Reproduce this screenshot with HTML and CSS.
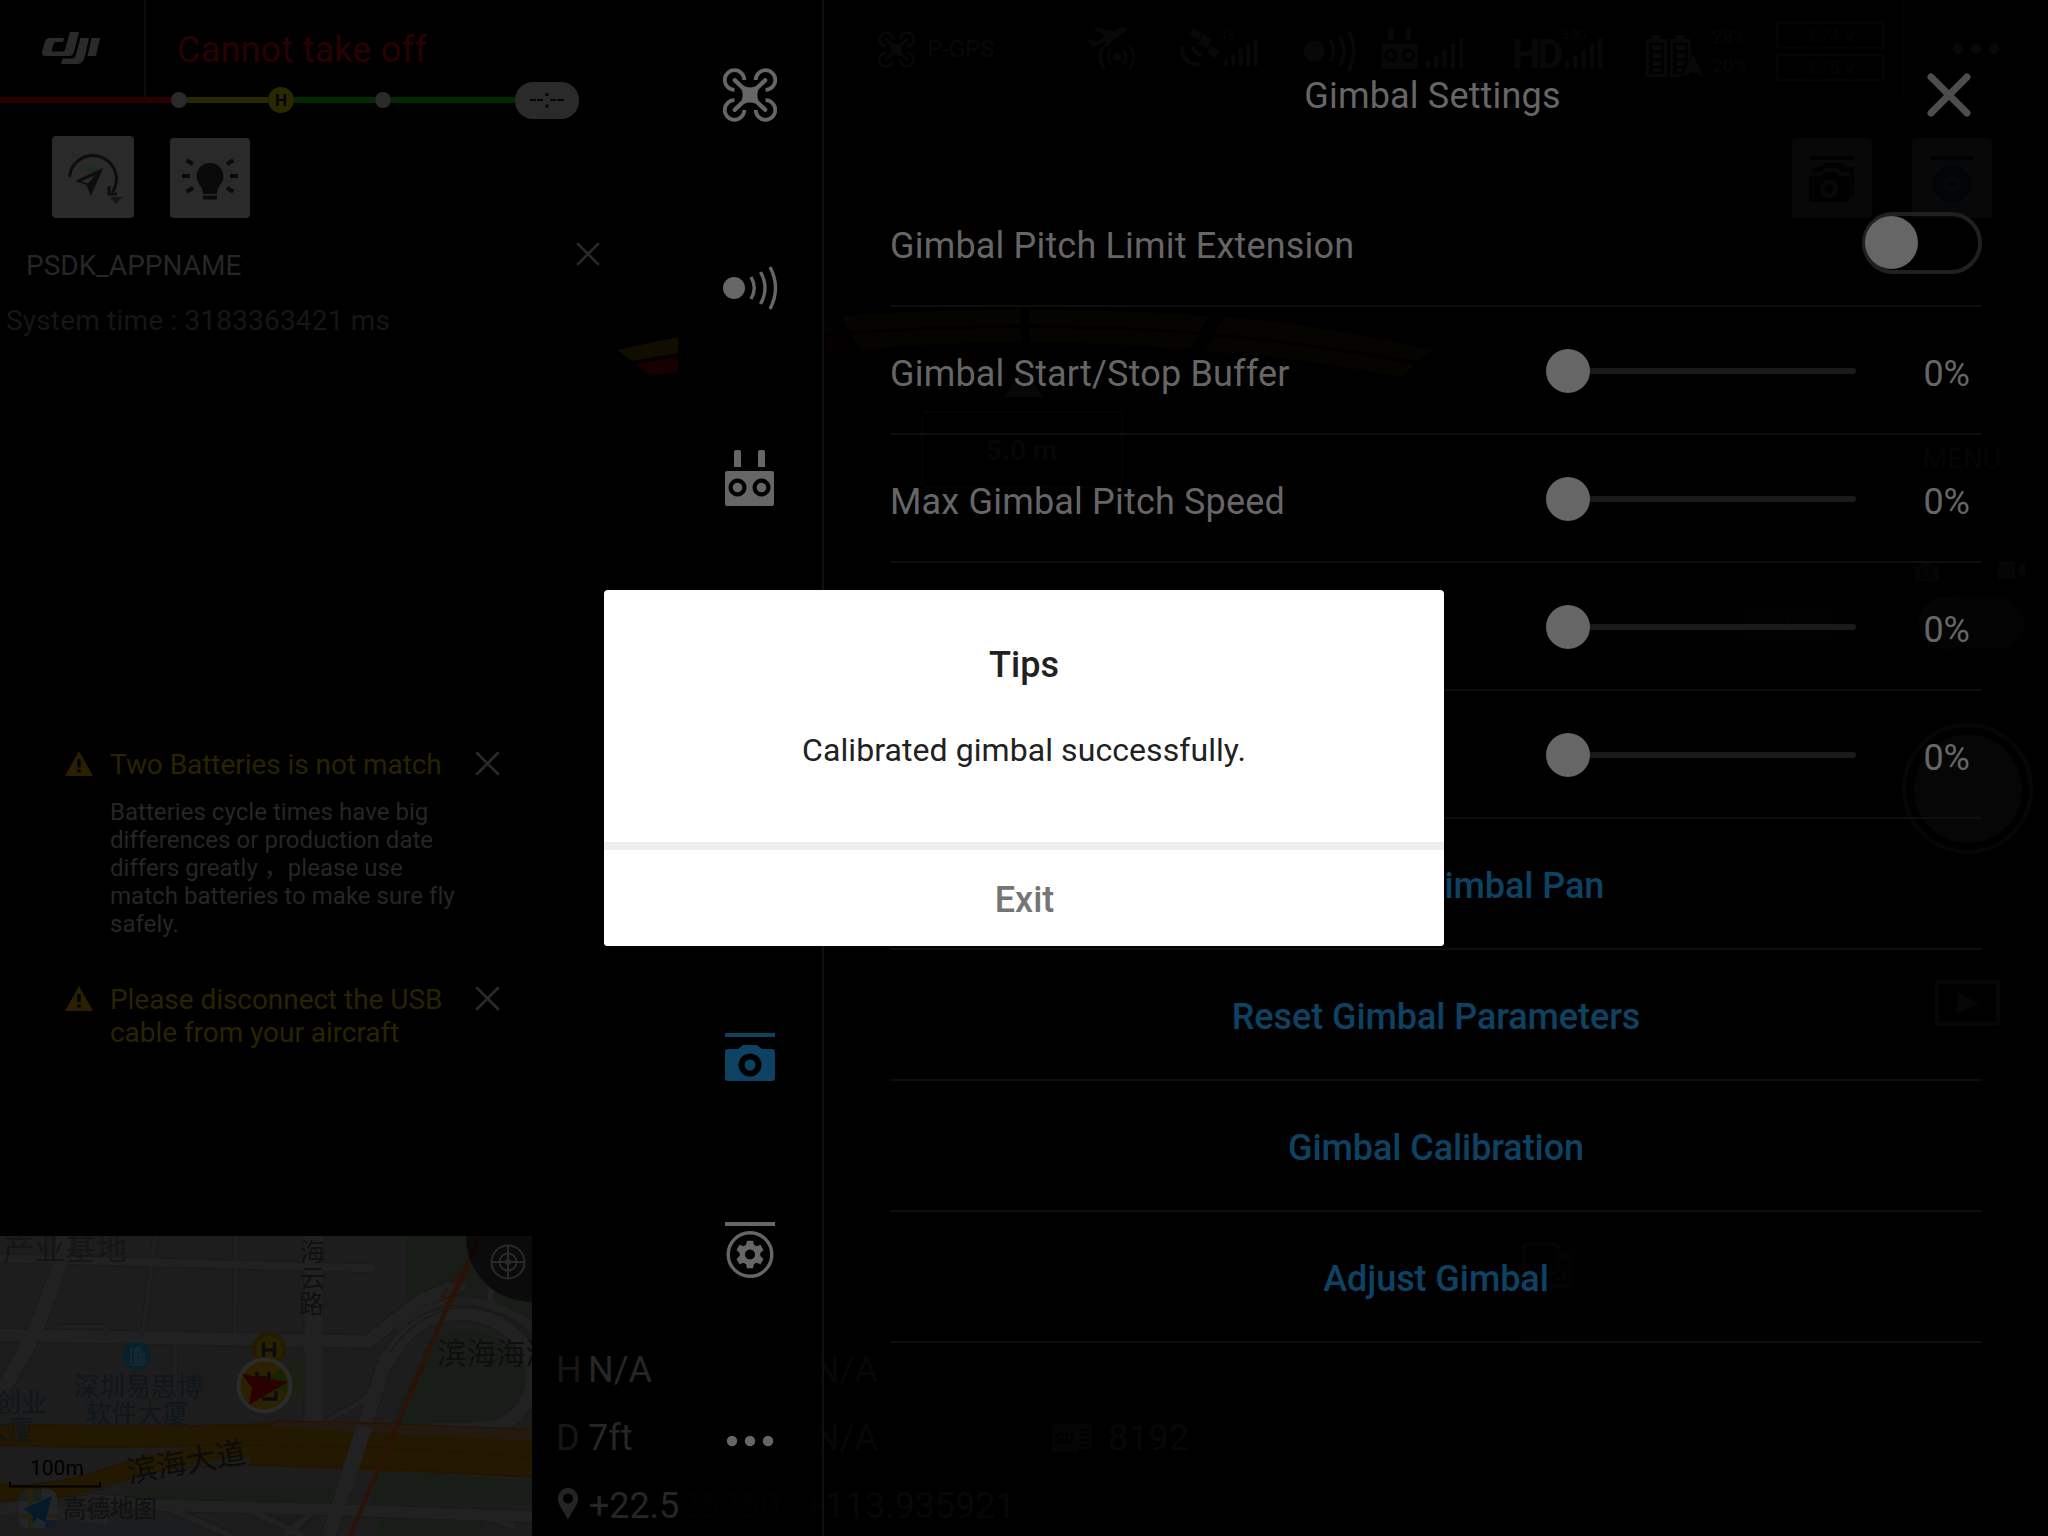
FILE: index.html
```html
<!DOCTYPE html>
<html lang="en">
<head>
<meta charset="utf-8">
<title>Gimbal Settings</title>
<link rel="stylesheet" href="styles.css">
</head>
<body>
<svg class="defs" aria-hidden="true">
  <symbol id="drone" viewBox="0 0 54 54">
    <g fill="none" stroke="currentColor" stroke-width="3.800">
      <path d="M21.3 12a9.8 9.8 0 1 0-9.8 9.8"/>
      <path d="M32.7 12a9.8 9.8 0 1 1 9.8 9.8"/>
      <path d="M21.3 42a9.8 9.8 0 1 1-9.8-9.8"/>
      <path d="M32.7 42a9.8 9.8 0 1 0 9.8-9.8"/>
    </g>
    <path fill="currentColor" d="M10.300 10.600q2-1.600 3.400.4L21 18q6 2.800 12 0L40.300 11q1.600-2 3.400-.4 1.600 1.800-.4 3.600L35.500 21.500q-2.300 5.500 0 11L43.300 39.800q2 1.800.4 3.600-1.800 1.600-3.400-.4L33 36q-6-2.800-12 0L13.700 43q-1.600 2-3.400.4-1.600-1.800.4-3.600L18.500 32.500q2.300-5.500 0-11L10.700 14.200q-2-1.800-.4-3.600z"/>
  </symbol>
  <symbol id="sense" viewBox="0 0 56 44">
    <circle cx="11" cy="22" r="11" fill="currentColor"/>
    <g fill="none" stroke="currentColor" stroke-width="3.400">
      <path d="M28 11q6.500 11 0 22M37.500 6q9 16 0 32M47 1q11 21 0 42"/>
    </g>
  </symbol>
  <symbol id="remote" viewBox="0 0 50 56">
    <path fill="currentColor" fill-rule="evenodd" d="M11 0h3q2 0 2 2v15h-7V2q0-2 2-2zM35 0h3q2 0 2 2v15h-7V2q0-2 2-2zM2 21h45q2 0 2 2v31q0 2-2 2H2q-2 0-2-2V23q0-2 2-2zM12.500 28.500a9 9 0 1 0 .01 0zM36.500 28.500a9 9 0 1 0 .01 0z"/>
    <circle cx="12.500" cy="37.500" r="4.800" fill="currentColor"/><circle cx="36.500" cy="37.500" r="4.800" fill="currentColor"/>
  </symbol>
  <symbol id="bars" viewBox="0 0 40 32">
    <path fill="currentColor" d="M0 24h4.500v8H0zM8.700 18h4.500v14H8.700zM17.400 12h4.500v20h-4.500zM26.100 6h4.500v26h-4.500zM34.800 0h4.500v32h-4.500z"/>
  </symbol>
  <symbol id="cross" viewBox="0 0 24 24">
    <path d="M1.200 1.200 22.800 22.800M22.800 1.200 1.200 22.800" fill="none" stroke="currentColor" stroke-width="2.600"/>
  </symbol>
  <symbol id="warn" viewBox="0 0 28 25">
    <path fill="currentColor" fill-rule="evenodd" d="M14 0 28 25H0zM12.300 8v8.500h3.400V8zM12.300 18.500v3h3.400v-3z"/>
  </symbol>
  <symbol id="gear" viewBox="0 0 28 28">
    <path fill="currentColor" fill-rule="evenodd" d="M11 0h6l.9 4.200 2.600 1.500 4-1.400 3 5.200-3.200 2.900v3.200l3.200 2.900-3 5.200-4-1.400-2.600 1.500L17 28h-6l-.9-4.200-2.600-1.500-4 1.400-3-5.200 3.200-2.900v-3.200L.5 9.500l3-5.200 4 1.400 2.600-1.500zM14 9a5 5 0 1 0 .01 0z"/>
  </symbol>
</svg>

<div class="screen">
  <section class="hud">
    <header class="topbar">
      <svg class="logo" viewBox="0 0 58 32" fill="currentColor">
        <path fill-rule="evenodd" d="M28 0h9l-5 20q-1 4-5 4H4q-4.500 0-4-4L2.500 11Q3.500 6 8 6h14l-1 4h-7q-2 0-2.600 2.400L10 17.500q-.5 2 1.500 2h9q2 0 2.500-2z"/>
        <path d="M38.500 6H47l-4 18q-1.800 8-8 8H19l1.500-5.500H30q3 0 3.700-3z"/>
        <path d="M49.500 6H58l-4 18h-8.500z"/>
      </svg>
      <i class="vline"></i>
      <h1 class="flight-status">Cannot take off</h1>
      <div class="stat mode"><svg class="i-drone"><use href="#drone"/></svg><span>P-GPS</span></div>
      <svg class="i-plane" viewBox="0 0 46 43" fill="currentColor"><path d="M0 14l4-1 4 2 9-6L5 2l5-1 15 3 8-4q6-1 6 2-1 3-5 5l-8 5-6 7-5 1 4-7L6 20q-3 0-6-6z"/><circle cx="29" cy="30" r="4"/><g fill="none" stroke="currentColor" stroke-width="2.600"><path d="M23 22q-6 8 0 16M35 22q6 8 0 16M17 18q-10 12 0 24M41 18q10 12 0 24"/></g></svg>
      <div class="stat gps"><svg class="i-sat" viewBox="0 0 40 39" fill="currentColor"><path d="M13 0l9 5-3 7-9-6zM24 6l8 6-5 9-9-6zM31 18l8 5-4 7-8-6z"/><path d="M13 18q1 8 9 9M2 19q0 17 18 18" fill="none" stroke="currentColor" stroke-width="4"/></svg><div class="sig"><small>15</small><svg class="i-bars"><use href="#bars"/></svg></div></div>
      <svg class="i-sense"><use href="#sense"/></svg>
      <div class="stat rc"><svg class="i-rc"><use href="#remote"/></svg><svg class="i-bars"><use href="#bars"/></svg></div>
      <div class="stat hd"><b>HD</b><div class="sig"><small>5.8G</small><svg class="i-bars"><use href="#bars"/></svg></div></div>
      <div class="stat batt"><svg class="i-batt" viewBox="0 0 58 42" fill="currentColor"><path fill-rule="evenodd" d="M0 4h6V0h8v4h7v38H0zM3 8v31h15V8zM24 4h6V0h8v4h7v16l-3 7V8H27v31h8l-1 3H24z"/><path d="M6 10h9v5H6zM6 18h9v5H6zM6 26h9v5H6zM6 33h9v4H6zM30 10h9v5h-9zM30 18h9v5h-9zM30 26h8v5h-8zM30 33h6v4h-6zM47 20l11 22-11-5-11 5z"/></svg><div class="pct"><span>28%</span><span>20%</span></div></div>
      <div class="volts"><span>3.74 V</span><span>3.75 V</span></div>
      <i class="vline"></i>
      <svg class="i-more" viewBox="0 0 46 10" fill="currentColor"><circle cx="5" cy="5" r="5"/><circle cx="23" cy="5" r="5"/><circle cx="41" cy="5" r="5"/></svg>
    </header>

    <div class="timeline">
      <i class="seg red"></i><i class="dot"></i><i class="seg yellow"></i><b class="home">H</b><i class="seg green"></i><i class="dot"></i><i class="seg green last"></i>
      <span class="pill"><svg viewBox="0 0 34 16" fill="#050505"><path d="M0 7h6v2H0zM7 7h6v2H7zM20 7h6v2h-6zM27 7h7v2h-7zM15.500 1h3v3h-3zM15.500 12.500h3v3h-3z"/></svg></span>
    </div>

    <div class="body">
      <div class="left">
        <div class="tools">
          <span class="tile big"><svg viewBox="0 0 82 82"><defs><linearGradient id="beam" x1="0" y1="0" x2="0" y2="1"><stop offset="0" stop-color="#28302a" stop-opacity=".2"/><stop offset="1" stop-color="#0c2a14"/></linearGradient></defs><path d="M28 27q13-7 25 0L42 43z" fill="url(#beam)"/><path d="M17.500 41a23.500 23.500 0 1 1 43 15" fill="none" stroke="#0d0d0d" stroke-width="3"/><path d="M57 50v8h8" fill="none" stroke="#0d0d0d" stroke-width="3"/><path fill-rule="evenodd" fill="#0d0d0d" d="M51 32 39 60l-4.500-11L23 45zM44 39l-15 6 7 2.500z"/><path d="M58 61h12l-6 7z" fill="#151515"/></svg></span>
          <span class="tile"><svg viewBox="0 0 80 80" fill="#0a0a0a"><path d="M40 25c-8 0-13.500 6-13.500 13.500 0 7 6.500 9 6.500 17.500h14c0-8.500 6.500-10.500 6.500-17.500C53.500 31 48 25 40 25zM33 57.500h14v4H33z"/><path d="M12 36h8v4h-8zM60 36h8v4h-8zM15.500 24l2.500-3.500 6 4-2 3.500zM64.500 24 62 20.500l-6 4 2 3.500zM15.500 52l2.500 3.500 6-4-2-3.500zM64.500 52 62 55.500l-6-4 2-3.500z"/></svg></span>
        </div>
        <div class="psdk">
          <div class="psdk-head"><span>PSDK_APPNAME</span><svg class="x"><use href="#cross"/></svg></div>
          <p>System time : 3183363421 ms</p>
        </div>
        <div class="warnings">
          <article>
            <svg class="warn"><use href="#warn"/></svg>
            <div class="msg"><h2>Two Batteries is not match</h2>
            <p>Batteries cycle times have big<br>differences or production date<br>differs greatly ，please use<br>match batteries to make sure fly<br>safely.</p></div>
            <svg class="x"><use href="#cross"/></svg>
          </article>
          <article>
            <svg class="warn"><use href="#warn"/></svg>
            <div class="msg"><h2>Please disconnect the USB<br>cable from your aircraft</h2></div>
            <svg class="x"><use href="#cross"/></svg>
          </article>
        </div>
        <svg class="map" viewBox="0 0 532 300">
          <rect width="532" height="300" fill="#1d1d1d"/>
          <g transform="scale(.35714 .33333) translate(0 -48)">
            <path d="M1140 48h350v330l-100-80-140-50-110 0zM1230 620q120 0 180-30 60-30 55-120-10-90-110-130-90-30-160 40l-110 250zM380 800h560l-30 50H330zM1060 745l430 40v70l-450-8zM760 880l130 10-70 60zM1050 948l20-60 250-5 40 20-30 45z" fill="#191d18"/>
            <path d="M450 875q100 0 200 73H130v-50z" fill="#1b1d1f"/>
            <g fill="none" stroke="#1a1a1a" stroke-linejoin="round">
              <path d="M0 345 1030 365 1180 240 1300 190" stroke-width="44"/>
              <path d="M180 48 170 130 95 345 40 450 0 520" stroke-width="48"/>
              <path d="M435 48 400 345M660 48 658 345M165 320H295V350M490 370V600" stroke-width="18"/>
              <path d="M0 115 1040 145" stroke-width="30" stroke-linecap="round"/>
              <path d="M878 48V600" stroke-width="58"/>
              <path d="M920 600 1020 540 1130 380" stroke-width="20"/>
              <path d="M920 948 1020 620 1080 420Q1170 270 1310 280 1500 320 1490 500 1460 620 1350 625 1280 630 1210 625" stroke-width="46"/>
              <path d="M1375 200v50l115 60" stroke-width="24"/>
              <path d="M230 835 420 855 900 868 1490 890" stroke-width="40"/>
              <path d="M480 870 650 948M700 870 850 948M870 880 800 948M1300 870 1440 920" stroke-width="24"/>
            </g>
            <g fill="none" stroke="#212121" stroke-linejoin="round">
              <path d="M0 345 1030 365 1180 240 1300 190" stroke-width="38"/>
              <path d="M180 48 170 130 95 345 40 450 0 520" stroke-width="42"/>
              <path d="M435 48 400 345M660 48 658 345M165 320H295V350M490 370V600" stroke-width="12" stroke="#1f1f1f"/>
              <path d="M0 115 1040 145" stroke-width="24" stroke-linecap="round"/>
              <path d="M878 48V610" stroke-width="52"/>
              <path d="M920 600 1020 540 1130 380" stroke-width="14"/>
              <path d="M920 948 1020 620 1080 420Q1170 270 1310 280 1500 320 1490 500 1460 620 1350 625 1280 630 1210 625" stroke-width="40"/>
              <path d="M1375 200v50l115 60" stroke-width="18"/>
              <path d="M230 835 420 855 900 868 1490 890" stroke-width="34"/>
              <path d="M480 870 650 948M700 870 850 948M870 880 800 948M1300 870 1440 920" stroke-width="18"/>
              <path d="M0 870 60 860 300 900" stroke-width="30"/>
            </g>
            <path d="M1110 330Q1200 230 1330 245 1430 265 1490 330" fill="none" stroke="#202020" stroke-width="20"/>
            <path d="M1090 400Q1180 262 1310 262 1430 275 1490 350" fill="none" stroke="#191919" stroke-width="3"/>
            <g fill="none" stroke="#231900"><path d="M0 645Q300 655 540 648T780 640L1100 650 1490 690" stroke-width="66"/><path d="M700 700 1490 735" stroke-width="74"/><path d="M0 818Q150 825 280 775T640 690L820 680" stroke-width="50"/></g>
            <path d="M760 605h240l490 25v32l-380-20-350-22z" fill="#251a10"/>
            <path d="M0 613 540 617 750 615 780 603 1000 608 1490 628M0 674Q300 690 560 674L1060 682 1490 712M0 793Q120 800 230 768T420 702M0 843 240 826Q330 780 480 745L700 735 1040 742 1490 772" fill="none" stroke="#241300" stroke-width="3"/>
            <path d="M1020 620 960 820" fill="none" stroke="#212121" stroke-width="44"/>
            <path d="M1345 48 1240 290 980 948" fill="none" stroke="#2a1206" stroke-width="12"/>
            <path d="M1305 48h185v198q-100-5-150-80-35-50-35-118z" fill="#0a0b0a"/>
            <path d="M1345 48 1318 110" stroke="#120700" stroke-width="12"/>
            <path d="M760 480 850 400v110l-30 30z" fill="#1a2012"/>
          </g>
          <g class="cjk" lang="zh-CN">
            <text x="3" y="24" font-size="31" fill="#151515">产业基地</text>
            <text x="300 300 299" y="24.500 50.500 76.500" font-size="25" fill="#101010">海云路</text>
            <g font-size="26" fill="#0e171b"><text x="73" y="160">深圳易思博</text><text x="85" y="187">软件大厦</text><text x="-5" y="176">创业</text><text x="-18" y="203">大厦</text></g>
            <text x="437" y="128" font-size="29.500" fill="#0e0e0e">滨海海滨</text>
            <text transform="translate(129 247) rotate(-10)" font-size="30" fill="#0b0b0b">滨海大道</text>
            <text transform="translate(447 32) rotate(20)" x="14 5 3" y="2 17 33" font-size="18" fill="#2c1206">2号线</text>
            <text x="63" y="281" font-size="23.500" font-weight="500" fill="#121212">高德地图</text>
          </g>
          <circle cx="137" cy="120" r="14" fill="#06222d"/><path d="M131 127v-14h4v14M137 127v-15h3v15M141 127v-9h3v9M129 128.500h16" fill="none" stroke="#1c2a30" stroke-width="1.500"/>
          <circle cx="269" cy="113" r="17" fill="#231c00"/><circle cx="269" cy="113" r="13" fill="#2a2100"/>
          <path d="M263.500 106v15M274.500 106v15M263.500 114h11" stroke="#0b0b0b" stroke-width="3.200" fill="none"/>
          <circle cx="264.500" cy="149.500" r="26" fill="#2a2100" stroke="#2b2b2b" stroke-width="4"/>
          <path d="M264 149 280 133a23 23 0 0 1 6 23z" fill="#142400"/><path d="M257 136v6h12v-6M262 163h14v-8" fill="none" stroke="#0b0b0b" stroke-width="3.500"/>
          <path d="M242 138 288 146 249 169 252 152z" fill="#2a0000"/>
          <g fill="none" stroke="#2a2a2a" stroke-width="2"><circle cx="508" cy="26" r="16.500"/><circle cx="508" cy="26" r="8.500"/><path d="M491 26h34M508 9v34"/></g><circle cx="508" cy="26" r="3" fill="#2a2a2a"/>
          <text class="scale" x="30" y="239" font-size="21" fill="#000">100m</text>
          <path d="M10 246v4.500h90V246" fill="none" stroke="#000" stroke-width="2"/>
          <rect x="19" y="253" width="38" height="39" rx="9" fill="#232526"/><path d="M19 264q0-11 9-11h14v12H19z" fill="#17201a"/><path d="M28 253h5v39h-5zM19 278h38v4H19z" fill="#262010"/><path d="M45 284h12q0 8-8 8h-4z" fill="#121a2c"/>
          <path d="M52 260 24 273l8 5 1 8 5-4 7 4z" fill="#04192a"/>
        </svg>
      </div>

      <div class="center">
        <svg class="radar" viewBox="0 0 816 100">
          <path fill="#110d00" d="M0 42Q110 17 208 9L219 25Q115 35 15 53z"/>
          <path fill="#1c1500" d="M224 8Q310 2 404 1v15q-85 1-171 8zM234 26q85-5 170-6v14q-85 1-161 7zM412 1q94 1 180 7l-9 16q-86-7-171-8zM412 20q85 1 170 6l-9 15q-80-6-161-7zM608 9q98 8 208 33l-15 11Q701 35 597 25zM596 29q100 8 202 28l-15 12Q690 50 586 43z"/>
          <path d="M18 56Q120 37 217 29L228 43Q130 51 34 68z" fill="#160000"/>
          <path d="M387 89 406.500 60 426 89z" fill="#262626"/>
        </svg>
        <div class="distance">5.0 m</div>
        <div class="telemetry">
          <span class="k">H</span><span>N/A</span><span class="k">V.S</span><span>N/A</span><i></i><i></i>
          <span class="k">D</span><span>7ft</span><span class="k">H.S.</span><span>N/A</span><svg class="sd" viewBox="0 0 40 28" fill="currentColor"><path fill-rule="evenodd" d="M2 0h36q2 0 2 2v21q0 2-2 2H26v3H2q-2 0-2-2V2q0-2 2-2zM28 5v2h9V5zM28 10v2h9v-2zM28 15v2h9v-2zM28 20v2h9v-2z"/><text x="3" y="20" font-size="15" font-weight="700" fill="#000">SD</text></svg><span>8192</span>
          <svg class="pin" viewBox="0 0 20 32"><path fill="currentColor" fill-rule="evenodd" d="M10 0a10 10 0 0 1 10 10.500C20 18 13 24 10 32 7 24 0 18 0 10.500A10 10 0 0 1 10 0zM10 5.500a5 5 0 1 0 .01 0z"/></svg><span class="coords">+22.525350 , +113.935921</span>
        </div>
      </div>

      <div class="right">
        <div class="modes">
          <span class="tile"><svg viewBox="0 0 80 80" fill="#060606"><path d="M18 18h44v4H18z"/><path d="M20 31q0-2 2-2h7l4-4h16l4 4h6q3 0 3 3v22q0 3-3 5V37q0-3-3-3h-6l-4-4H33l-4 4h-9z"/><path fill-rule="evenodd" d="M17 41q0-3 3-3h8l4-4h12l4 4h7q3 0 3 3v20q0 3-3 3H20q-3 0-3-3zM37 42a9 9 0 1 0 .01 0z"/><circle cx="37" cy="51" r="4.500"/></svg></span>
          <span class="tile"><svg viewBox="0 0 80 80"><path d="M18 18h44v4H18z" fill="#04121c"/><circle cx="40" cy="46" r="19.500" fill="#061a28"/><svg x="30" y="36" width="20" height="20" color="#2a2a2a"><use href="#gear"/></svg></svg></span>
        </div>
        <div class="menu">MENU</div>
        <div class="capture"><svg class="i-cam" viewBox="0 0 25 20"><path fill="currentColor" fill-rule="evenodd" d="M0 5h7l2-4h7l2 4h7v15H0zM12.500 6a6 6 0 1 0 .01 0z"/><circle cx="12.500" cy="12" r="4.500" fill="currentColor"/></svg><svg class="i-vid" viewBox="0 0 27 18"><path fill="currentColor" d="M0 0h17v18H0zM20 7l7-7v18l-7-6z"/></svg></div>
        <div class="switchrow"><span class="ev">0</span><span class="cam-switch"><i></i></span></div>
        <div class="shutter"><i></i></div>
        <svg class="play" viewBox="0 0 66 46"><rect x="2" y="2" width="62" height="42" rx="1" fill="none" stroke="currentColor" stroke-width="4"/><path d="M22 12 45 23 22 34z" fill="currentColor"/></svg>
        <div class="pip"><svg viewBox="0 0 50 46" fill="none" stroke="currentColor" stroke-width="3"><rect x="2" y="2" width="34" height="29" rx="2"/><path d="M40 14h6q2 0 2 2v26q0 2-2 2H24M42 28v10h-10"/></svg></div>
      </div>
    </div>
  </section>

  <section class="drawer">
    <nav class="tabs">
      <a><svg width="54" height="54"><use href="#drone"/></svg></a>
      <a><svg width="56" height="44"><use href="#sense"/></svg></a>
      <a><svg width="50" height="56"><use href="#remote"/></svg></a>
      <a></a>
      <a></a>
      <a class="active"><svg width="50" height="48" viewBox="0 0 50 48" fill="currentColor"><path d="M0 0h50v4H0z"/><path fill-rule="evenodd" d="M3 16h10l5-4h14l5 4h10q3 0 3 3v26q0 3-3 3H3q-3 0-3-3V19q0-3 3-3zM25 20.500a11.500 11.500 0 1 0 .01 0z"/><circle cx="25" cy="32" r="5.500"/></svg></a>
      <a><svg width="50" height="56" viewBox="0 0 50 56"><path d="M0 0h50v4H0z" fill="currentColor"/><circle cx="25" cy="32.500" r="21.800" fill="none" stroke="currentColor" stroke-width="3.400"/><svg x="11" y="18.500" width="28" height="28"><use href="#gear"/></svg></svg></a>
      <a><svg width="48" height="12" viewBox="0 0 48 12" fill="currentColor"><circle cx="6" cy="6" r="5.200"/><circle cx="24" cy="6" r="5.200"/><circle cx="42" cy="6" r="5.200"/></svg></a>
    </nav>
    <div class="settings">
      <header><h2>Gimbal Settings</h2><svg class="close" viewBox="0 0 44 44"><path d="M4 4 40 40M40 4 4 40" stroke="currentColor" stroke-width="7" stroke-linecap="round"/></svg></header>
      <div class="row"><label>Gimbal Pitch Limit Extension</label><span class="toggle"><i></i></span></div>
      <div class="row"><label>Gimbal Start/Stop Buffer</label><span class="slider"><i></i></span><output>0%</output></div>
      <div class="row"><label>Max Gimbal Pitch Speed</label><span class="slider"><i></i></span><output>0%</output></div>
      <div class="row"><label></label><span class="slider"><i></i></span><output>0%</output></div>
      <div class="row"><label></label><span class="slider"><i></i></span><output>0%</output></div>
      <a class="row action">Recenter Gimbal Pan</a>
      <a class="row action">Reset Gimbal Parameters</a>
      <a class="row action">Gimbal Calibration</a>
      <a class="row action">Adjust Gimbal</a>
    </div>
  </section>

  <div class="dialog" role="dialog">
    <h2>Tips</h2>
    <p>Calibrated gimbal successfully.</p>
    <button>Exit</button>
  </div>
</div>
</body>
</html>
```
FILE: styles.css
```css
* { box-sizing: border-box; margin: 0; padding: 0; }
body { background: #000; font-family: Roboto, "Noto Sans CJK SC", sans-serif; color: #262626; }
h1, h2 { font-weight: 400; }
i { display: block; font-style: normal; }
svg { display: block; flex: none; }
.defs { position: absolute; width: 0; height: 0; }
.screen { position: relative; width: 2048px; height: 1536px; overflow: hidden; }

/* flight view */
.hud { height: 1536px; display: flex; flex-direction: column; white-space: nowrap; }
.topbar { height: 82px; flex: none; display: grid; align-items: start; justify-items: start; color: #2a2a2a;
  grid-template-columns: 144px 33px 701px 210px 92px 123px 78px 131px 134px 130px 126px 50px 1fr; }
.logo { width: 58px; height: 32px; margin: 32px 0 0 42px; }
.vline { width: 2px; height: 97px; background: #0b0b0b; }
.flight-status { font-size: 36px; line-height: 101px; letter-spacing: .2px; color: #2a0000; }
.stat { display: flex; align-items: flex-end; }
.mode { margin-top: 29px; gap: 12px; align-items: center; font-size: 24px; line-height: 41px; }
.i-drone { width: 37px; height: 37px; }
.i-plane { width: 46px; height: 43px; margin-top: 27px; }
.gps { margin-top: 28px; gap: 4px; }
.i-sat { width: 40px; height: 39px; }
.sig small { display: block; font-size: 12px; line-height: 10px; }
.i-bars { width: 38px; height: 31px; }
.gps .sig small { margin: 0 0 -3px -3px; }
.gps .i-bars { width: 34px; height: 29px; }
.i-sense { width: 55px; height: 42px; margin-top: 30px; }
.rc { margin-top: 28px; gap: 7px; }
.i-rc { width: 38px; height: 41px; }
.hd { margin-top: 30px; gap: 5px; height: 39px; }
.hd b { font-size: 40px; line-height: 28px; font-weight: 700; width: 48px; letter-spacing: -3px; }
.hd small { margin: 0 0 -2px -3px; }
.batt { margin-top: 35px; gap: 8px; align-items: flex-start; height: 42px; }
.i-batt { width: 58px; height: 42px; }
.pct { margin-top: -8px; display: flex; flex-direction: column; gap: 9px; font-size: 19px; line-height: 20px; color: #1d2620; }
.volts { margin-top: 22px; display: flex; flex-direction: column; gap: 5px; font-size: 18px; }
.volts span { width: 108px; height: 27px; line-height: 24px; text-align: center; border: 2px solid #0c1e16; color: #151c18; border-radius: 2px; }
.i-more { width: 46px; height: 10px; margin: 44px 0 0 1px; }

.timeline { height: 36px; flex: none; display: flex; align-items: center; }
.seg { height: 6px; width: 94px; }
.seg.red { width: 171px; background: #2a0000; }
.seg.yellow { background: #2a2800; width: 81px; }
.seg.green { background: #002a00; width: 81px; }
.seg.last { width: 124px; }
.dot { width: 16px; height: 16px; border-radius: 50%; background: #2a2a2a; }
.home { width: 26px; height: 26px; border-radius: 50%; background: #2a2800; color: #050505; font-size: 17px; line-height: 27px; text-align: center; font-weight: 700; }
.pill { width: 64px; height: 37px; border-radius: 18px; background: #2a2a2a; display: grid; place-items: center; }
.pill svg { width: 34px; height: 16px; }

.body { flex: 1; display: flex; min-height: 0; }
.left { width: 532px; flex: none; display: flex; flex-direction: column; }
.tools { padding: 18px 0 0 52px; display: flex; gap: 36px; align-items: flex-end; }
.tile { width: 80px; height: 80px; border-radius: 4px; background: #2a2a2a; display: block; }
.tile.big { width: 82px; height: 82px; }
.psdk { margin-top: 31px; font-size: 28px; line-height: 33px; }
.psdk-head { width: 600px; padding-left: 26px; display: flex; justify-content: space-between; }
.psdk .x { width: 24px; height: 24px; margin-top: -7px; color: #2a2a2a; }
.psdk p { margin: 22px 0 0 6px; letter-spacing: .18px; color: #161616; }
.warnings { margin-top: 411px; padding-left: 66px; display: flex; flex-direction: column; gap: 45px; }
.warnings article { display: flex; align-items: flex-start; }
.warn { width: 28px; height: 25px; margin: 3px 16px 0 -1px; color: #2a2000; }
.msg { width: 366px; padding-left: 1px; }
.msg h2 { font-size: 28px; line-height: 33px; letter-spacing: -.05px; color: #282400; }
.msg p { margin-top: 17px; font-size: 24px; line-height: 28px; letter-spacing: .04px; }
.warnings .x { width: 25px; height: 25px; margin-top: 3px; color: #2a2a2a; }
.map { width: 532px; height: 300px; margin-top: auto; }
.cjk { font-family: "Noto Sans CJK SC", sans-serif; }

.center { width: 985px; flex: none; display: flex; flex-direction: column; align-items: center; }
.radar { width: 816px; height: 100px; margin-top: 190px; }
.distance { width: 202px; height: 77px; margin: 3px 6px 0 0; border: 2px solid #161616; border-radius: 5px; font-size: 28px; font-weight: 700; line-height: 75px; text-align: center; color: #202020; }
.telemetry { align-self: stretch; margin: auto 0 -3px; padding-left: 24px; display: grid; align-items: center; font-size: 36px; line-height: 68px;
  grid-template: 68px 68px 67px / 32px 157px 69px 238px 56px 1fr; }
.k { color: #161616; }
.sd { width: 40px; height: 28px; color: #1c1c1c; margin-bottom: 1px; }
.pin { width: 20px; height: 32px; color: #242424; margin: -3px 0 0 2px; }
.coords { grid-column: 2 / -1; padding-left: 1px; letter-spacing: -.1px; }

.right { flex: 1; display: flex; flex-direction: column; align-items: flex-end; color: #222; }
.modes { margin: 20px 56px 0 0; display: flex; gap: 40px; }
.menu { margin: 224px 47px 0 0; font-size: 28px; line-height: 33px; color: #1c1c1c; }
.capture { margin: 86px 23px 0 0; display: flex; gap: 59px; color: #1a1a1a; }
.i-cam { width: 25px; height: 20px; }
.i-vid { width: 27px; height: 18px; }
.switchrow { margin: 16px 24px 0 0; display: flex; gap: 86px; align-items: center; }
.ev { width: 90px; height: 33px; border-radius: 3px; background: #0c0c0c; color: #000; font-size: 24px; line-height: 34px; text-align: center; }
.cam-switch { width: 105px; height: 52px; border-radius: 26px; background: #0f0f0f; }
.cam-switch i { width: 52px; height: 52px; border-radius: 50%; background: #181818; }
.shutter { width: 131px; height: 131px; margin: 74px 15px 0 0; border: 4px solid #222; border-radius: 50%; display: grid; place-items: center; }
.shutter i { width: 108px; height: 108px; border-radius: 50%; background: #222; }
.play { width: 65px; height: 46px; margin: 126px 48px 0 0; }
.pip { width: 531px; height: 300px; margin-top: auto; background: #050505; color: #1c1c1c; }
.pip svg { width: 50px; height: 46px; margin: 6px 0 0 5px; }

/* settings drawer */
.drawer { position: absolute; left: 678px; top: 0; right: 0; bottom: 0; display: flex; color: #666; }
.tabs { width: 144px; display: flex; flex-direction: column; background: rgba(0, 0, 0, .93); }
.tabs a { flex: 1; display: grid; place-items: center; padding-bottom: 2px; }
.tabs a:nth-child(2) { padding: 0 0 0 2px; }
.tabs a:nth-child(7) { padding: 3px 0 0; }
.tabs a:nth-child(8) { padding: 0; }
.tabs .active { color: #0d4263; padding: 1px 0 0; }
.settings { flex: 1; padding: 0 66px; border-left: 2px solid #101010; background: rgba(0, 0, 0, .8); background-clip: padding-box; font-size: 36px; }
.settings header { height: 179px; display: flex; padding: 12px 11px 0 0; }
.settings h2 { flex: 1; padding-left: 48px; text-align: center; font-size: 36px; line-height: 168px; letter-spacing: .18px; }
.close { width: 44px; height: 44px; margin: 61px 0 0; color: #4d4d4d; }
.row { height: 128px; display: flex; align-items: center; border-bottom: 2px solid #0e0e0e; }
.row label { flex: 1; padding-top: 7px; letter-spacing: .18px; }
.toggle { width: 120px; height: 62px; border-radius: 31px; border: 4px solid #202020; margin-top: 1px; }
.toggle i { width: 53px; height: 53px; margin-left: -1px; border-radius: 50%; background: #666; }
.slider { width: 310px; height: 44px; margin-top: 2px; display: flex; align-items: center; }
.slider i { width: 44px; height: 44px; border-radius: 50%; background: #666; }
.slider::after { content: ""; flex: 1; height: 6px; border-radius: 0 3px 3px 0; background: #1a1a1a; }
.row output { width: 126px; padding: 7px 12px 0 0; text-align: right; }
.row.action { height: 131px; justify-content: center; padding-top: 4px; font-weight: 500; letter-spacing: -.08px; color: #0d4263; }

/* result dialog */
.dialog { position: absolute; left: 604px; top: 590px; width: 840px; height: 356px; border-radius: 4px; background: #fff; color: #212121; text-align: center; display: flex; flex-direction: column; overflow: hidden; }
.dialog h2 { margin-top: 54px; font-size: 36px; line-height: 42px; font-weight: 500; }
.dialog p { flex: 1; margin-top: 45px; font-size: 32px; line-height: 38px; letter-spacing: .07px; }
.dialog button { height: 104px; border: 0; border-top: 8px solid #eee; background: #fff; color: #757575; font: 500 36px/90px Roboto, sans-serif; padding: 3px 0 0 1px; }
```
